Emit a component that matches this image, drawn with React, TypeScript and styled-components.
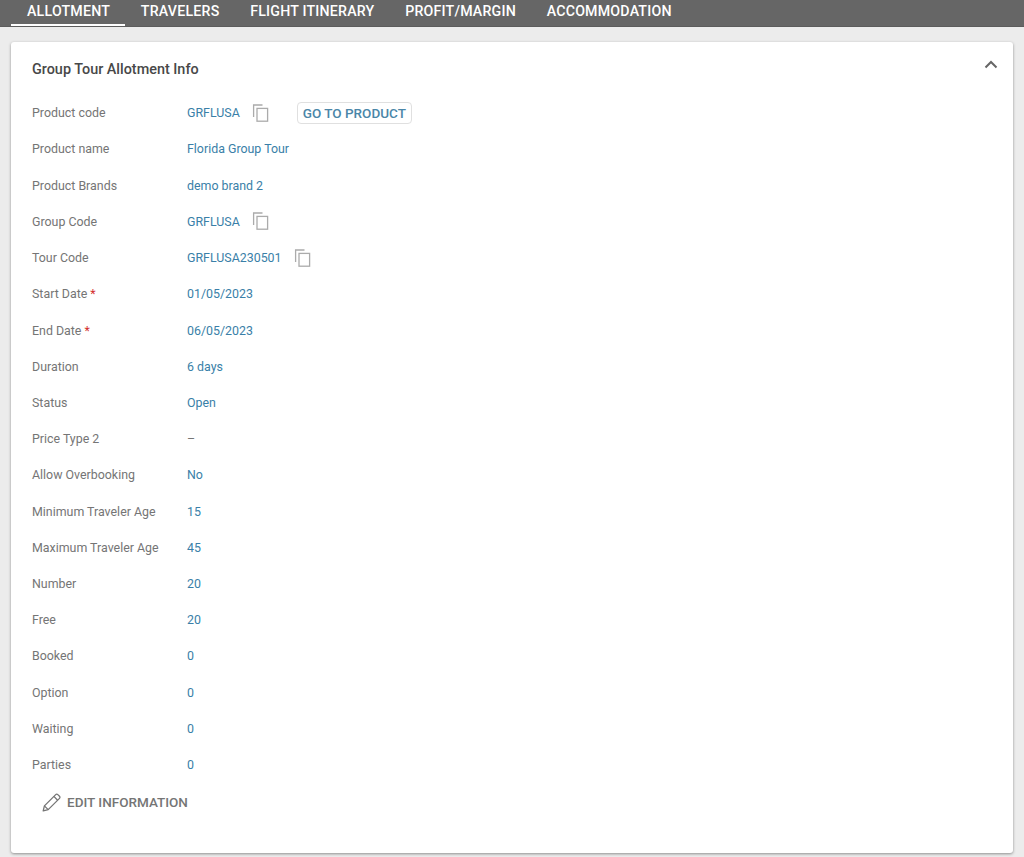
import React from 'react'
import styled, {createGlobalStyle} from 'styled-components'

const GlobalStyle = createGlobalStyle`
  html, body {
    margin: 0;
    padding: 0;
    background: #ECECEC;
    font-family: Roboto, "Liberation Sans", sans-serif;
  }
`

type Field = {
  label: string
  value: string
  required?: boolean
  copy?: boolean
  empty?: boolean
  link?: boolean
}

const TABS = ['ALLOTMENT', 'TRAVELERS', 'FLIGHT ITINERARY', 'PROFIT/MARGIN', 'ACCOMMODATION']

const FIELDS: Field[] = [
  {label: 'Product code', value: 'GRFLUSA', copy: true, link: true},
  {label: 'Product name', value: 'Florida Group Tour'},
  {label: 'Product Brands', value: 'demo brand 2'},
  {label: 'Group Code', value: 'GRFLUSA', copy: true},
  {label: 'Tour Code', value: 'GRFLUSA230501', copy: true},
  {label: 'Start Date', value: '01/05/2023', required: true},
  {label: 'End Date', value: '06/05/2023', required: true},
  {label: 'Duration', value: '6 days'},
  {label: 'Status', value: 'Open'},
  {label: 'Price Type 2', value: '–', empty: true},
  {label: 'Allow Overbooking', value: 'No'},
  {label: 'Minimum Traveler Age', value: '15'},
  {label: 'Maximum Traveler Age', value: '45'},
  {label: 'Number', value: '20'},
  {label: 'Free', value: '20'},
  {label: 'Booked', value: '0'},
  {label: 'Option', value: '0'},
  {label: 'Waiting', value: '0'},
  {label: 'Parties', value: '0'},
]

const CopyIcon = () => (
  <svg width="17" height="18" viewBox="0 0 17 18" fill="none" stroke="#ABABAB" strokeWidth="1.3">
    <path d="M10.5 1H1.6v12" />
    <rect x="5" y="4.4" width="10.6" height="12.8" />
  </svg>
)

const PencilIcon = () => (
  <svg width="19" height="19" viewBox="0 0 19 19" fill="none" stroke="#757575" strokeWidth="1.3" strokeLinejoin="round">
    <path d="M1.2 17.8l1.2-4.9L13.7 1.6c.6-.6 1.5-.6 2.1 0l1.7 1.7c.6.6.6 1.5 0 2.1L6.2 16.6z" />
    <path d="M2.4 12.9l3.8 3.7M11.9 3.4l3.7 3.8" />
  </svg>
)

const App = () => (
  <>
    <GlobalStyle />
    <TabBar>
      {TABS.map((tab, index) => (
        <Tab key={tab} active={index === 0}>{tab}</Tab>
      ))}
    </TabBar>
    <Page>
      <Card>
        <CardHeader>
          <CardTitle>Group Tour Allotment Info</CardTitle>
          <Chevron width="14" height="9" viewBox="0 0 14 9" fill="none" stroke="#666" strokeWidth="2">
            <path d="M1.5 7.5L7 2l5.5 5.5" />
          </Chevron>
        </CardHeader>
        <FieldList>
          {FIELDS.map(field => (
            <Row key={field.label}>
              <Label>
                {field.label}
                {field.required && <Required> *</Required>}
              </Label>
              <Value empty={field.empty}>{field.value}</Value>
              {field.copy && <CopyButton><CopyIcon /></CopyButton>}
              {field.link && <ProductLink>GO TO PRODUCT</ProductLink>}
            </Row>
          ))}
        </FieldList>
        <EditButton>
          <PencilIcon />
          EDIT INFORMATION
        </EditButton>
      </Card>
    </Page>
  </>
)

export default App

const TabBar = styled.div`
  display: flex;
  height: 26px;
  padding-left: 11px;
  background: #666666;
  border-bottom: 1px solid #5c5c5c;
`

const Tab = styled.div<{active?: boolean}>`
  height: 26px;
  box-sizing: border-box;
  padding: 3px 14.75px 0 16px;
  font-size: 14.2px;
  line-height: 17px;
  font-weight: 500;
  letter-spacing: 0.2px;
  color: #FFF;
  border-bottom: ${({active}) => (active ? '2px solid #FFF' : 'none')};
`

const Page = styled.div`
  padding: 15px 11px 4px;
`

const Card = styled.div`
  height: 811px;
  box-sizing: border-box;
  background: #FFF;
  border-radius: 3px;
  box-shadow: 0 1px 3px rgba(0, 0, 0, 0.4);
`

const CardHeader = styled.div`
  display: flex;
  justify-content: space-between;
  align-items: flex-start;
  padding: 19px 15px 0 21px;
`

const Chevron = styled.svg`
  margin-top: -1px;
`

const CardTitle = styled.div`
  font-size: 14.4px;
  line-height: 17px;
  font-weight: 500;
  color: #484848;
`

const FieldList = styled.div`
  display: flex;
  flex-direction: column;
  padding: 16.6px 0 0 21px;
`

const Row = styled.div`
  display: flex;
  align-items: center;
  height: 36.22px;
  font-size: 12.4px;
`

const Label = styled.div`
  width: 155px;
  color: #757575;
`

const Required = styled.span`
  color: #D32F2F;
`

const Value = styled.div<{empty?: boolean}>`
  color: ${({empty}) => (empty ? '#757575' : '#3A7FA8')};
`

const CopyButton = styled.span`
  display: flex;
  margin-left: 12px;
`

const ProductLink = styled.div`
  margin-left: 28px;
  padding: 0 5px;
  height: 22px;
  line-height: 20px;
  box-sizing: border-box;
  font-size: 13.5px;
  font-weight: 500;
  color: #4A86A8;
  border: 1px solid #E0E0E0;
  border-radius: 4px;
`

const EditButton = styled.div`
  display: flex;
  align-items: center;
  gap: 6px;
  margin: 1.6px 0 0 31px;
  height: 36px;
  font-size: 13.5px;
  font-weight: 500;
  color: #757575;
`
